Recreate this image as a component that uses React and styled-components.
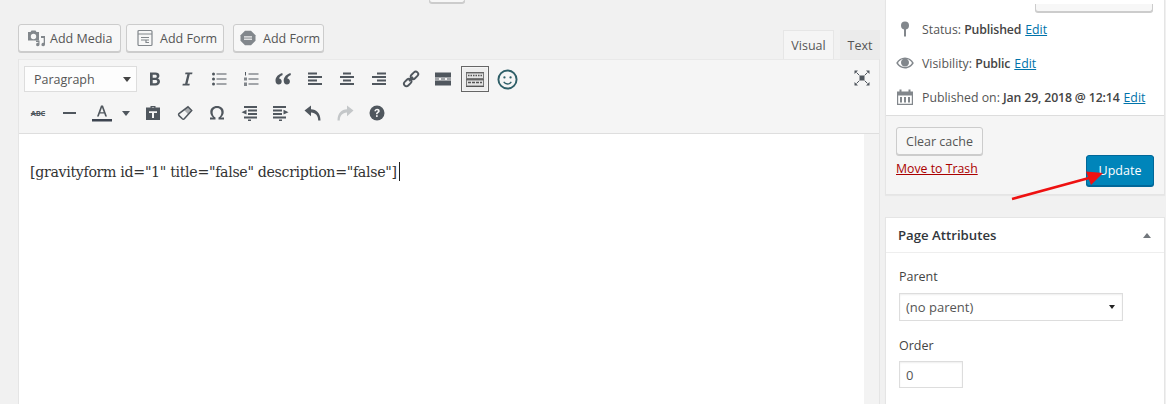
import React from 'react';
import styled, { createGlobalStyle } from 'styled-components';

const GlobalStyle = createGlobalStyle`
  html, body {
    margin: 0;
    padding: 0;
    background: #f1f1f1;
  }
  body {
    font-family: "Open Sans", "Liberation Sans", sans-serif;
    font-size: 13px;
    color: #555;
    overflow: hidden;
  }
`;

const Page = styled.div`
  position: relative;
  display: flex;
  width: 1166px;
  height: 404px;
  overflow: hidden;
  box-sizing: border-box;
  padding-left: 18px;
`;

const Main = styled.div`
  width: 862px;
  display: flex;
  flex-direction: column;
`;

const StubRow = styled.div`
  display: flex;
  justify-content: ${p => (p.$end ? 'flex-end' : 'flex-start')};
  height: ${p => p.$height}px;
  padding: ${p => p.$pad};
`;

const Stub = styled.div`
  width: ${p => p.$width}px;
  height: 100%;
  box-sizing: border-box;
  background: #f7f7f7;
  border: 1px solid #ccc;
  border-top: none;
  border-radius: 0 0 3px 3px;
  box-shadow: 0 1px 0 #ccc;
`;

const EditorTools = styled.div`
  display: flex;
  justify-content: space-between;
  align-items: flex-end;
  height: 56px;
`;

const MediaButtons = styled.div`
  display: flex;
  align-self: flex-start;
  margin-top: 21px;
`;

const MediaButton = styled.div`
  display: flex;
  align-items: center;
  gap: ${p => p.$gap}px;
  width: ${p => p.$width}px;
  height: 28px;
  box-sizing: border-box;
  margin-right: ${p => p.$right}px;
  padding-left: ${p => p.$pad}px;
  background: #f7f7f7;
  border: 1px solid #ccc;
  border-radius: 3px;
  box-shadow: 0 1px 0 #ccc;
  font-size: 12.5px;
  color: #555;
`;

const Tabs = styled.div`
  display: flex;
`;

const Tab = styled.div`
  width: ${p => p.$width}px;
  height: 29px;
  box-sizing: border-box;
  margin-left: 6px;
  display: flex;
  align-items: center;
  justify-content: center;
  font-size: 12.5px;
  color: #555;
  background: ${p => (p.$active ? '#f5f5f5' : '#ebebeb')};
  border: 1px solid ${p => (p.$active ? '#e6e6e6' : '#ebebeb')};
  border-bottom: none;
`;

const Wrap = styled.div`
  flex: 1;
  display: flex;
  flex-direction: column;
  background: #f3f3f3;
  border-left: 1px solid #e5e5e5;
  border-right: 1px solid #e5e5e5;
`;

const Toolbar = styled.div`
  position: relative;
  height: 75px;
  box-sizing: border-box;
  padding-top: 6px;
  background: #f5f5f5;
  border-top: 1px solid #e9e9e9;
  border-bottom: 1px solid #dedede;
`;

const ToolRow = styled.div`
  display: flex;
  align-items: center;
  height: 26px;
  margin-bottom: 8px;
  padding-left: ${p => p.$pad}px;
`;

const FormatSelect = styled.div`
  display: flex;
  align-items: center;
  justify-content: space-between;
  width: 113px;
  height: 26px;
  box-sizing: border-box;
  margin-right: 2px;
  padding: 0 5px 0 9px;
  background: #fdfdfd;
  border: 1px solid #ddd;
  font-size: 12.5px;
  color: #555;
`;

const Caret = styled.span`
  width: 0;
  height: 0;
  border-left: ${p => p.$size}px solid transparent;
  border-right: ${p => p.$size}px solid transparent;
  border-top: ${p => p.$size + 1}px solid ${p => p.$color || '#444'};
`;

const ToolButton = styled.div`
  display: flex;
  align-items: center;
  justify-content: center;
  flex: none;
  width: ${p => p.$width || 32}px;
  height: 26px;
  box-sizing: border-box;
  margin: 0 ${p => p.$right || 0}px 0 ${p => p.$left || 0}px;
  color: #50575e;
  ${p => p.$pressed && `
    background: #ededed;
    border: 1px solid #666;
    box-shadow: inset 0 0 0 1px #f5f5f5;
  `}
`;

const StrikeLabel = styled.span`
  font-size: 7.5px;
  font-weight: 700;
  letter-spacing: -0.2px;
  color: #50575e;
  text-decoration: line-through;
`;

const FullscreenButton = styled(ToolButton)`
  position: absolute;
  top: 5px;
  right: 1px;
`;

const EditorBody = styled.div`
  flex: 1;
  display: flex;
`;

const EditorContent = styled.div`
  width: 845px;
  box-sizing: border-box;
  padding: 27px 0 0 11px;
  background: #fff;
  font-family: "DejaVu Serif", "Liberation Serif", serif;
  font-size: 14.2px;
  letter-spacing: -0.33px;
  line-height: 22px;
  color: #333;
`;

const Cursor = styled.span`
  display: inline-block;
  width: 1px;
  height: 19px;
  margin-left: 2px;
  vertical-align: -4px;
  background: #222;
`;

const Side = styled.div`
  width: 280px;
  margin-left: 5px;
  display: flex;
  flex-direction: column;
`;

const Box = styled.div`
  background: #fff;
  border: 1px solid #e5e5e5;
  border-top: ${p => (p.$open ? 'none' : '1px solid #e5e5e5')};
  box-shadow: 0 1px 1px rgba(0, 0, 0, 0.04);
  margin-bottom: ${p => p.$bottom || 0}px;
`;

const MetaRow = styled.div`
  display: flex;
  align-items: center;
  height: 34px;
  padding-left: 9px;
  white-space: nowrap;
  font-size: 12.3px;
  color: #555;
  b {
    font-weight: 600;
    letter-spacing: -0.15px;
    color: #444;
  }
  a {
    margin-left: 4px;
    color: #0073aa;
    text-decoration: underline;
  }
`;

const MetaIcon = styled.span`
  display: flex;
  justify-content: center;
  width: 20px;
  margin-right: 7px;
  color: #82878c;
`;

const MetaList = styled.div`
  height: 115px;
  padding-top: 4px;
  box-sizing: border-box;
`;

const Actions = styled.div`
  display: flex;
  justify-content: space-between;
  align-items: flex-end;
  height: 79px;
  box-sizing: border-box;
  padding: 11px 10px 8px 10px;
  background: #f5f5f5;
  border-top: 1px solid #ddd;
`;

const ActionsLeft = styled.div`
  display: flex;
  flex-direction: column;
  align-self: flex-start;
  align-items: flex-start;
`;

const ClearButton = styled.div`
  display: flex;
  align-items: center;
  justify-content: center;
  width: 87px;
  height: 28px;
  box-sizing: border-box;
  background: #f7f7f7;
  border: 1px solid #ccc;
  border-radius: 3px;
  box-shadow: 0 1px 0 #ccc;
  font-size: 12.5px;
  color: #555;
`;

const TrashLink = styled.a`
  margin-top: 5px;
  font-size: 12.3px;
  line-height: 18px;
  color: #a00;
  text-decoration: underline;
`;

const UpdateButton = styled.div`
  display: flex;
  align-items: center;
  justify-content: center;
  width: 68px;
  height: 31px;
  box-sizing: border-box;
  background: #0085ba;
  border: 1px solid #006799;
  border-radius: 3px;
  box-shadow: 0 1px 0 #006799;
  font-size: 12.5px;
  font-weight: 500;
  color: #fff;
`;

const BoxHeader = styled.div`
  display: flex;
  align-items: center;
  justify-content: space-between;
  height: 35px;
  box-sizing: border-box;
  padding: 0 13px 0 12px;
  border-bottom: 1px solid #eee;
  font-size: 13.2px;
  font-weight: 600;
  color: #32373c;
`;

const UpCaret = styled.span`
  width: 0;
  height: 0;
  border-left: 4px solid transparent;
  border-right: 4px solid transparent;
  border-bottom: 5px solid #72777c;
`;

const BoxBody = styled.div`
  padding: 15px 13px 20px;
`;

const FieldLabel = styled.div`
  font-size: 12.5px;
  font-weight: 500;
  line-height: 18px;
  color: #444;
  margin-bottom: ${p => p.$bottom}px;
`;

const ParentSelect = styled.div`
  display: flex;
  align-items: center;
  justify-content: space-between;
  width: 224px;
  height: 28px;
  box-sizing: border-box;
  margin-bottom: 16px;
  padding: 0 7px 0 6px;
  background: #fff;
  border: 1px solid #ddd;
  box-shadow: inset 0 1px 2px rgba(0, 0, 0, 0.07);
  font-size: 13px;
  color: #555;
`;

const OrderInput = styled.div`
  display: flex;
  align-items: center;
  width: 64px;
  height: 27px;
  box-sizing: border-box;
  padding-left: 6px;
  background: #fff;
  border: 1px solid #ddd;
  box-shadow: inset 0 1px 2px rgba(0, 0, 0, 0.07);
  font-size: 13px;
  color: #555;
`;

const Arrow = styled.svg`
  position: absolute;
  left: 1005px;
  top: 165px;
`;

const Icon = ({ w = 16, h = 16, children, fill = 'currentColor' }) => (
  <svg width={w} height={h} viewBox={`0 0 ${w} ${h}`} fill={fill}>
    {children}
  </svg>
);

const Lines = ({ rows }) => (
  <Icon>
    {rows.map(([x, y, w, h = 2], i) => (
      <rect key={i} x={x} y={y} width={w} height={h} />
    ))}
  </Icon>
);

const BoldGlyph = () => (
  <Icon>
    <path d="M3 1.500h5.400c2.600 0 4 1.100 4 3.200 0 1.400-.8 2.400-2 2.800 1.600.3 2.600 1.400 2.600 3.100 0 2.400-1.700 3.900-4.400 3.900H3zm2.700 2.300v3h2.300c1.200 0 1.800-.5 1.800-1.500s-.6-1.500-1.800-1.500zm0 5.200v3.300h2.600c1.300 0 2-.6 2-1.700s-.7-1.600-2-1.600z" />
  </Icon>
);

const ItalicGlyph = () => (
  <Icon>
    <path d="M6.500 1.500h7l-.4 1.800h-2.300L8.500 12.700h2.300l-.4 1.800h-7l.4-1.800h2.300l2.300-9.400H6.100z" />
  </Icon>
);

const BulletList = () => (
  <Icon>
    <circle cx="2.500" cy="3" r="1.500" />
    <circle cx="2.500" cy="8" r="1.500" />
    <circle cx="2.500" cy="13" r="1.500" />
    <rect x="5.500" y="2.500" width="10" height="1" />
    <rect x="5.500" y="7.500" width="10" height="1" />
    <rect x="5.500" y="12.500" width="10" height="1" />
  </Icon>
);

const NumberList = () => (
  <Icon>
    <rect x="2" y="1" width="1" height="3.500" />
    <rect x="1" y="6.500" width="3" height="3" opacity="0.7" />
    <rect x="1" y="11.500" width="3" height="3.500" opacity="0.7" />
    <rect x="5.500" y="2.500" width="10" height="1" />
    <rect x="5.500" y="7.500" width="10" height="1" />
    <rect x="5.500" y="12.500" width="10" height="1" />
  </Icon>
);

const QuoteGlyph = () => (
  <Icon>
    <path d="M7.300 2C3.500 3.200.5 5.800.5 9.800c0 2.300 1.300 3.700 3.200 3.700 1.700 0 3-1.300 3-3 0-1.700-1.100-2.900-2.600-3 .3-1.400 1.600-2.700 3.600-3.500zM15.500 2c-3.800 1.200-6.800 3.800-6.800 7.800 0 2.300 1.300 3.700 3.200 3.700 1.700 0 3-1.300 3-3 0-1.700-1.100-2.900-2.600-3 .3-1.400 1.600-2.700 3.600-3.500z" />
  </Icon>
);

const LinkGlyph = () => (
  <svg width="18" height="18" viewBox="0 0 18 18" fill="none" stroke="currentColor" strokeWidth="1.900">
    <rect x="8.300" y="2.800" width="8.400" height="5" rx="2.500" transform="rotate(-45 12.500 5.300)" />
    <rect x="1.500" y="10" width="8.400" height="5" rx="2.500" transform="rotate(-45 5.700 12.500)" />
    <path d="M7 11l4-4" />
  </svg>
);

const KitchenGlyph = () => (
  <svg width="18" height="15" viewBox="0 0 18 15">
    <rect x="0" y="0" width="18" height="1" fill="#555" />
    <rect x="0.500" y="1" width="17" height="5.500" fill="#e4e4e4" stroke="#777" strokeWidth="1" />
    <path d="M2 3.500h14" stroke="#555" strokeWidth="1.400" strokeDasharray="1.500 1" fill="none" />
    <rect x="0" y="7" width="18" height="1" fill="#555" />
    <rect x="0.500" y="8" width="17" height="6" fill="#e4e4e4" stroke="#777" strokeWidth="1" />
    <path d="M2 10.500h14" stroke="#555" strokeWidth="1.400" strokeDasharray="3 1" fill="none" />
    <rect x="0" y="14" width="18" height="1" fill="#555" />
  </svg>
);

const SmileGlyph = () => (
  <svg width="21" height="21" viewBox="0 0 22 22" fill="none" stroke="#2f5f68" strokeWidth="2">
    <circle cx="11" cy="11" r="9.500" />
    <circle cx="7.800" cy="8.800" r="1.200" fill="#2f5f68" stroke="none" />
    <circle cx="14.200" cy="8.800" r="1.200" fill="#2f5f68" stroke="none" />
    <path d="M7 13.500c1 1.500 2.400 2.200 4 2.200s3-.7 4-2.200" strokeWidth="1.400" />
  </svg>
);

const FullscreenGlyph = () => (
  <Icon>
    <rect x="5.500" y="5.500" width="5" height="5" />
    <path d="M5.300 5.300L2.500 2.500M10.700 5.300l2.800-2.800M5.300 10.700l-2.800 2.800M10.700 10.700l2.800 2.800" stroke="currentColor" strokeWidth="1" fill="none" />
    <path d="M.5.500h3.500L.5 4zM15.500.5V4L12 .5zM.5 15.500V12L4 15.500zM15.500 15.500H12l3.500-3.500z" />
  </Icon>
);

const TextColorGlyph = () => (
  <svg width="20" height="20" viewBox="0 0 20 20" fill="currentColor">
    <path d="M9 2.500h2l4 11h-1.800l-1-3H7.800l-1 3H5zm-.7 6.700h3.400L10 4.500z" />
    <rect x="0" y="16" width="20" height="2.500" fill="#3d4450" />
  </svg>
);

const PasteGlyph = () => (
  <Icon>
    <path d="M5.500 2.500V1h5v1.500H15V15H1V2.500zm1.300 0h2.400V2H6.800z" />
    <path d="M4 6.200h8v1.800H9v5H7V8H4z" fill="#f5f5f5" />
  </Icon>
);

const EraserGlyph = () => (
  <Icon>
    <path d="M11 1.800l3.700 3.700-7.400 8.200a1.400 1.400 0 0 1-2 .1L2 10.600a1.400 1.400 0 0 1 0-2z" fill="none" stroke="currentColor" strokeWidth="1.500" />
    <path d="M7 5l4.400 4.400 3.300-3.900-3.700-3.700z" opacity="0.45" />
  </Icon>
);

const OmegaGlyph = () => (
  <Icon>
    <path d="M1 14.500v-2h3.200C2.400 11.200 1.300 9.300 1.300 7 1.300 3.500 4 1 8 1s6.700 2.500 6.700 6c0 2.300-1.100 4.200-2.900 5.500H15v2H9.500v-2c1.800-.9 2.900-2.900 2.900-5.300C12.400 4.700 10.700 3 8 3S3.600 4.700 3.600 7.200c0 2.400 1.100 4.400 2.900 5.300v2z" />
  </Icon>
);

const OutdentGlyph = () => (
  <Icon>
    <rect x="3" y="1" width="13" height="2" />
    <rect x="7" y="4.500" width="9" height="2" />
    <rect x="7" y="8" width="9" height="2" />
    <rect x="3" y="11.500" width="13" height="2" />
    <rect x="7" y="14.500" width="3" height="1.500" />
    <path d="M5.500 4.800v4.700L.5 7.200z" />
  </Icon>
);

const IndentGlyph = () => (
  <Icon>
    <rect x="0" y="1" width="13" height="2" />
    <rect x="0" y="4.500" width="9" height="2" />
    <rect x="0" y="8" width="9" height="2" />
    <rect x="0" y="11.500" width="13" height="2" />
    <rect x="6" y="14.500" width="3" height="1.500" />
    <path d="M10.500 4.800v4.700l5-2.300z" />
  </Icon>
);

const UndoGlyph = ({ flip, color }) => (
  <svg width="18" height="18" viewBox="0 0 18 18" fill={color || 'currentColor'} style={flip ? { transform: 'scaleX(-1)' } : undefined}>
    <path d="M7 1.500v3.800c5.500.2 9.500 4 9.500 11.200h-2.300c0-4.800-2.500-7.700-7.200-8v3.800L.5 6.500z" />
  </svg>
);

const HelpGlyph = () => (
  <svg width="16" height="16" viewBox="0 0 16 16">
    <circle cx="8" cy="8" r="7.500" fill="currentColor" />
    <path d="M5.400 6.200C5.500 4.700 6.600 3.800 8.100 3.800c1.600 0 2.600.9 2.600 2.200 0 1-.5 1.500-1.300 2-.6.400-.8.700-.8 1.300H7c0-1.100.3-1.600 1.100-2.200.6-.4.800-.7.800-1.100 0-.5-.3-.8-.9-.8s-1 .4-1 1z" fill="#f5f5f5" />
    <rect x="7" y="10.200" width="1.700" height="1.700" fill="#f5f5f5" />
  </svg>
);

const MediaIcon = () => (
  <svg width="19" height="18" viewBox="0 0 19 18" fill="#82878c">
    <path d="M1 3h2.500l1-1.500h4L9.500 3H12v8.500H1zm5.500 1.800a2.700 2.700 0 1 0 0 5.400 2.700 2.700 0 0 0 0-5.400z" />
    <path d="M14 7h4v8.500a1.800 1.800 0 1 1-1.300-1.700V9h-2.700zM9 11.500h3.500v4a1.700 1.700 0 1 1-1.200-1.600v-1H9z" />
  </svg>
);

const FormIcon = () => (
  <svg width="16" height="18" viewBox="0 0 16 18" fill="none" stroke="#82878c" strokeWidth="1.200">
    <rect x="1" y="1.500" width="14" height="15" rx="1" />
    <path d="M1 5h14M4 8.500h8M4 11h8M9 11v2.500h3" />
  </svg>
);

const HexIcon = () => (
  <svg width="16" height="16" viewBox="0 0 16 16">
    <path d="M5 .8h6L15.500 5.300v5.400L11 15.200H5L.5 10.700V5.300z" fill="#82878c" />
    <rect x="4" y="6.300" width="8" height="1.200" fill="#f7f7f7" />
    <rect x="4" y="8.600" width="8" height="1.200" fill="#f7f7f7" />
  </svg>
);

const PinIcon = () => (
  <svg width="12" height="16" viewBox="0 0 12 16" fill="currentColor">
    <circle cx="6" cy="4.500" r="4" />
    <rect x="5" y="8" width="2" height="7.500" />
  </svg>
);

const EyeIcon = () => (
  <svg width="18" height="12" viewBox="0 0 18 12">
    <path d="M9 .5c3.800 0 7 2.300 8.800 5.500C16 9.200 12.800 11.500 9 11.500S2 9.200.2 6C2 2.800 5.200.5 9 .5z" fill="currentColor" />
    <path d="M2 6c1.200-1.900 3-3.300 5-3.900a4 4 0 1 0 4 0c2 .6 3.800 2 5 3.900-1.600 2.500-4.100 4-7 4S3.600 8.500 2 6z" fill="#fff" />
    <circle cx="9" cy="5.500" r="2.600" fill="currentColor" />
  </svg>
);

const CalendarIcon = () => (
  <svg width="16" height="16" viewBox="0 0 16 16" fill="currentColor">
    <path d="M0 2.500h2.500V.5h2v2h7v-2h2v2H16V16H0zm1.200 4v8.300h13.600V6.500z" />
    <rect x="3" y="8" width="2" height="5.500" />
    <rect x="7" y="8" width="2" height="5.500" />
    <rect x="11" y="8" width="2" height="5.500" />
  </svg>
);

const App = () => (
  <Page>
    <GlobalStyle />
    <Main>
      <StubRow $height={3} $pad="0 0 0 411px">
        <Stub $width={36} />
      </StubRow>
      <EditorTools>
        <MediaButtons>
          <MediaButton $width={103} $right={5} $pad={8} $gap={4}>
            <MediaIcon />
            Add Media
          </MediaButton>
          <MediaButton $width={98} $right={9} $pad={10} $gap={7}>
            <FormIcon />
            Add Form
          </MediaButton>
          <MediaButton $width={91} $right={0} $pad={6} $gap={7}>
            <HexIcon />
            Add Form
          </MediaButton>
        </MediaButtons>
        <Tabs>
          <Tab $active $width={51}>Visual</Tab>
          <Tab $width={40}>Text</Tab>
        </Tabs>
      </EditorTools>
      <Wrap>
        <Toolbar>
          <ToolRow $pad={5}>
            <FormatSelect>
              Paragraph
              <Caret $size={4} />
            </FormatSelect>
            <ToolButton><BoldGlyph /></ToolButton>
            <ToolButton><ItalicGlyph /></ToolButton>
            <ToolButton><BulletList /></ToolButton>
            <ToolButton><NumberList /></ToolButton>
            <ToolButton><QuoteGlyph /></ToolButton>
            <ToolButton><Lines rows={[[1, 1.500, 9], [1, 5, 14], [1, 8.500, 9], [1, 12, 14]]} /></ToolButton>
            <ToolButton><Lines rows={[[4, 1.500, 8], [1, 5, 14], [4, 8.500, 8], [1, 12, 14]]} /></ToolButton>
            <ToolButton><Lines rows={[[6, 1.500, 9], [1, 5, 14], [6, 8.500, 9], [1, 12, 14]]} /></ToolButton>
            <ToolButton><LinkGlyph /></ToolButton>
            <ToolButton><Lines rows={[[0, 1.500, 16, 5], [0, 7.500, 4, 1], [6, 7.500, 4, 1], [12, 7.500, 4, 1], [0, 9.500, 16, 5]]} /></ToolButton>
            <ToolButton $pressed $width={28} $left={2} $right={2}><KitchenGlyph /></ToolButton>
            <ToolButton><SmileGlyph /></ToolButton>
          </ToolRow>
          <ToolRow $pad={3}>
            <ToolButton><StrikeLabel>ABC</StrikeLabel></ToolButton>
            <ToolButton><Lines rows={[[1, 7, 13, 2]]} /></ToolButton>
            <ToolButton><TextColorGlyph /></ToolButton>
            <ToolButton $width={16} $right={3}><Caret $size={4} $color="#50575e" /></ToolButton>
            <ToolButton><PasteGlyph /></ToolButton>
            <ToolButton><EraserGlyph /></ToolButton>
            <ToolButton><OmegaGlyph /></ToolButton>
            <ToolButton><OutdentGlyph /></ToolButton>
            <ToolButton><IndentGlyph /></ToolButton>
            <ToolButton><UndoGlyph /></ToolButton>
            <ToolButton><UndoGlyph flip color="#c4c7c9" /></ToolButton>
            <ToolButton><HelpGlyph /></ToolButton>
          </ToolRow>
          <FullscreenButton><FullscreenGlyph /></FullscreenButton>
        </Toolbar>
        <EditorBody>
          <EditorContent>
            [gravityform id="1" title="false" description="false"]<Cursor />
          </EditorContent>
        </EditorBody>
      </Wrap>
    </Main>
    <Side>
      <Box $open $bottom={22}>
        <MetaList>
          <StubRow $end $height={8} $pad="0 11px 0 0">
            <Stub $width={118} />
          </StubRow>
          <MetaRow>
            <MetaIcon><PinIcon /></MetaIcon>
            Status:&nbsp;<b>Published</b><a>Edit</a>
          </MetaRow>
          <MetaRow>
            <MetaIcon><EyeIcon /></MetaIcon>
            Visibility:&nbsp;<b>Public</b><a>Edit</a>
          </MetaRow>
          <MetaRow>
            <MetaIcon><CalendarIcon /></MetaIcon>
            Published on:&nbsp;<b>Jan 29, 2018 @ 12:14</b><a>Edit</a>
          </MetaRow>
        </MetaList>
        <Actions>
          <ActionsLeft>
            <ClearButton>Clear cache</ClearButton>
            <TrashLink>Move to Trash</TrashLink>
          </ActionsLeft>
          <UpdateButton>Update</UpdateButton>
        </Actions>
      </Box>
      <Box>
        <BoxHeader>
          Page Attributes
          <UpCaret />
        </BoxHeader>
        <BoxBody>
          <FieldLabel $bottom={7}>Parent</FieldLabel>
          <ParentSelect>
            (no parent)
            <Caret $size={3} $color="#222" />
          </ParentSelect>
          <FieldLabel $bottom={6}>Order</FieldLabel>
          <OrderInput>0</OrderInput>
        </BoxBody>
      </Box>
    </Side>
    <Arrow width="105" height="42" viewBox="0 0 105 42">
      <path d="M7 34L84 13" stroke="#ee1111" strokeWidth="2.600" fill="none" />
      <path d="M98 8L81 6.500 86 20z" fill="#ee1111" />
    </Arrow>
  </Page>
);

export default App;
